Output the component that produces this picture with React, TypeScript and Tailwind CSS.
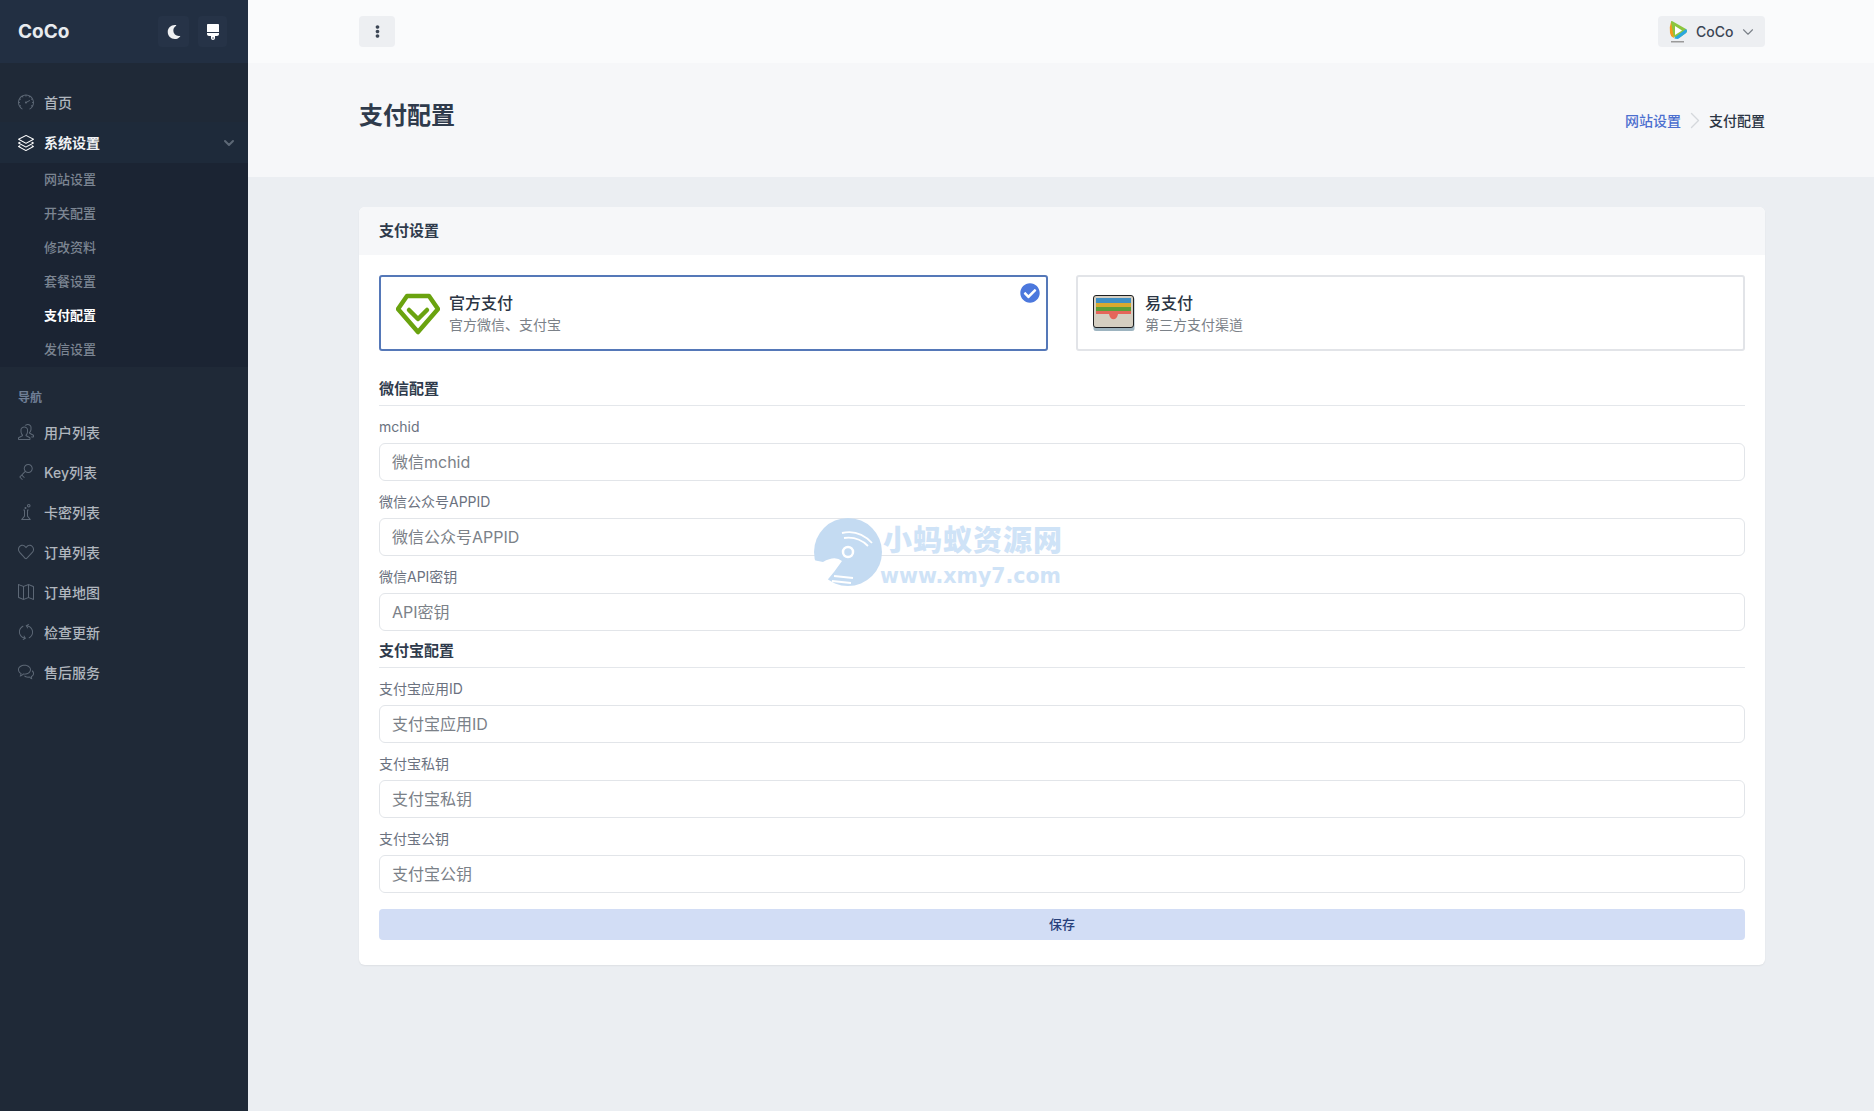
import { SlSpeedometer, SlLayers, SlPeople, SlKey, SlChemistry, SlHeart, SlMap, SlRefresh, SlBubbles } from "react-icons/sl";
import { FaMoon, FaBrush, FaEllipsisV, FaCheckCircle } from "react-icons/fa";
import { ChevronDown, ChevronRight } from "lucide-react";

const FONT = "font-['Inter','Noto_Sans_CJK_SC',sans-serif]";

const subMenu = ["网站设置", "开关配置", "修改资料", "套餐设置", "支付配置", "发信设置"];

const navItems = [
  { label: "用户列表", icon: SlPeople },
  { label: "Key列表", icon: SlKey },
  { label: "卡密列表", icon: SlChemistry },
  { label: "订单列表", icon: SlHeart },
  { label: "订单地图", icon: SlMap },
  { label: "检查更新", icon: SlRefresh },
  { label: "售后服务", icon: SlBubbles },
];

function Sidebar() {
  return (
    <aside className="w-[248px] shrink-0 bg-[#1f2937]">
      <div className="h-[63px] px-[18px] flex items-center justify-between bg-[#222f42]">
        <span className="mt-[1px] text-[19px] font-bold text-[#e8ebef]">CoCo</span>
        <div className="flex items-center gap-[9px] mr-[3px]">
          <button className="w-[31px] h-[31px] rounded-[4px] bg-[#263347] flex items-center justify-center text-[#eef0f2]">
            <FaMoon className="w-[14px] h-[14px]" />
          </button>
          <button className="w-[29px] h-[31px] rounded-[4px] bg-[#263347] flex items-center justify-center text-white">
            <FaBrush className="w-[16px] h-[16px]" />
          </button>
        </div>
      </div>

      <nav className="pt-[19px]">
        <a className="h-[40px] pl-[18px] flex items-center gap-[10px] text-[14px] font-medium text-[#b0b6be]">
          <SlSpeedometer className="w-[16px] h-[16px] text-[#5d6876]" />
          首页
        </a>
        <a className="h-[41px] pl-[18px] pr-[11px] flex items-center gap-[10px] text-[14px] font-semibold text-[#f1f3f5] bg-[#1e2a3a]">
          <SlLayers className="w-[16px] h-[16px] text-white" />
          系统设置
          <ChevronDown className="ml-auto w-[16px] h-[16px] text-[#5d6876]" strokeWidth={3} />
        </a>
        <div className="bg-[#1b2433]">
          {subMenu.map((name) => (
            <a
              key={name}
              className={`h-[34px] pl-[44px] flex items-center text-[13px] font-medium ${name === "支付配置" ? "text-white font-semibold" : "text-[#7c8592]"}`}
            >
              {name}
            </a>
          ))}
        </div>

        <div className="pt-[22px] pb-[5px] pl-[18px] text-[12px] font-semibold leading-[18px] text-[#6f7f96]">导航</div>
        {navItems.map(({ label, icon: Icon }) => (
          <a key={label} className="h-[40px] pl-[18px] flex items-center gap-[10px] text-[14px] font-medium text-[#b0b6be]">
            <Icon className="w-[16px] h-[16px] text-[#5d6876]" />
            {label}
          </a>
        ))}
      </nav>
    </aside>
  );
}

function Field({ label, placeholder }: { label: string; placeholder: string }) {
  return (
    <div className="mb-[10px]">
      <label className="block h-[21px] mb-[6px] text-[14px] leading-[21px] text-[#6b7280]">{label}</label>
      <input
        readOnly
        placeholder={placeholder}
        className="block w-full h-[38px] px-[12px] rounded-[6px] border border-[#e2e5e9] bg-white text-[16px] placeholder:text-[#7b8188] outline-none"
      />
    </div>
  );
}

function SectionTitle({ children }: { children: string }) {
  return (
    <div className="h-[27px] mb-[10px] border-b border-[#e4e7eb] text-[15px] leading-[20px] font-semibold text-[#2f3b4c]">
      {children}
    </div>
  );
}

function PayOption({ title, desc, active, icon }: { title: string; desc: string; active?: boolean; icon: React.ReactNode }) {
  return (
    <div className={`relative flex-1 h-[76px] px-[15px] flex items-center gap-[9px] rounded-[3px] border-2 ${active ? "border-[#5578b8]" : "border-[#e2e4e8]"}`}>
      {icon}
      <div>
        <div className="text-[16px] leading-[24px] font-medium text-[#2b3544]">{title}</div>
        <div className="text-[14px] leading-[20px] text-[#7b8188]">{desc}</div>
      </div>
      {active && (
        <FaCheckCircle className="absolute right-[6px] top-[6px] w-[20px] h-[20px] text-[#4c78dd]" />
      )}
    </div>
  );
}

function DiamondIcon() {
  return (
    <svg viewBox="0 0 44 44" className="w-[44px] h-[44px] shrink-0" fill="none" stroke="#6aa30f" strokeLinejoin="round">
      <path d="M11 5 H33 L42 18 L22 41 L2 18 Z" strokeWidth="4.5" />
      <path d="M13 19 L22 28 L31 19" strokeWidth="4.5" strokeLinecap="round" />
    </svg>
  );
}

function WalletIcon() {
  return (
    <svg viewBox="0 0 42 36" className="w-[42px] h-[36px] mr-[1px] shrink-0">
      <rect x="0.5" y="2" width="41" height="34" rx="2.5" fill="#9db4c0" />
      <rect x="0.5" y="0.5" width="40" height="32" rx="2.5" fill="#d5cfc2" stroke="#1f2022" />
      <rect x="3" y="3" width="35" height="5" fill="#3f8fc4" />
      <rect x="3" y="8" width="35" height="4" fill="#d9a92e" />
      <rect x="3" y="12" width="35" height="4" fill="#5a9e38" />
      <path d="M3 16 H38 V19 H25 C24 26 17 26 16 19 H3 Z" fill="#e5665a" />
    </svg>
  );
}

function Watermark() {
  return (
    <div className="absolute left-[813px] top-[518px] w-[252px] h-[74px] pointer-events-none">
      <svg viewBox="0 0 70 72" className="absolute left-0 top-0 w-[70px] h-[72px]">
        <circle cx="35" cy="34" r="34" fill="#c4dbf2" />
        <path d="M0 42 L10 44 Q22 37 29 43 L21 54 L11 66 L0 60 Z" fill="#fff" />
        <circle cx="35" cy="34" r="5" fill="none" stroke="#fff" strokeWidth="2.5" />
        <path d="M29 15 Q46 11 59 25 M31 20 Q45 18 55 28" fill="none" stroke="#fff" strokeWidth="1.8" />
        <path d="M21 58 L40 60 M19 63 L38 65" stroke="#fff" strokeWidth="1.8" />
      </svg>
      <div className="absolute left-[70px] top-[6px] text-[29px] leading-[34px] font-black tracking-[1px] whitespace-nowrap text-[#cfe3f7]">小蚂蚁资源网</div>
      <div className="absolute left-[67px] top-[44px] font-['DejaVu_Sans',sans-serif] text-[20.5px] leading-[28px] font-bold whitespace-nowrap text-[#cfe3f7]">www.xmy7.com</div>
    </div>
  );
}

export default function App() {
  return (
    <div className={`${FONT} relative min-h-[1111px] flex bg-[#ebeef2]`}>
      <Sidebar />
      <main className="flex-1 min-w-0">
        <header className="h-[63px] pl-[111px] pr-[109px] flex items-center justify-between bg-[#fafbfc]">
          <button className="w-[36px] h-[31px] rounded-[4px] bg-[#edeff2] flex items-center justify-center text-[#3b4554]">
            <FaEllipsisV className="w-[13px] h-[13px]" />
          </button>
          <button className="w-[107px] h-[31px] pl-[10px] pr-[8px] rounded-[4px] bg-[#edeff2] flex items-center text-[#3b4554] text-[14px] font-medium">
            <svg viewBox="0 0 20 24" className="w-[20px] h-[24px] mr-[8px]">
              <path d="M4 1 Q3 0.5 3 2 V16 L11 18 L18 13 Q20 11 18 9 Z" fill="#8cc63f" />
              <path d="M3 2 Q1 7 2 13 Q3 17 6 18 Z" fill="#f39a1e" />
              <path d="M18 9 Q20 11 18 13 L10 19 Q7 19 6 18 Z" fill="#2aa6e0" />
              <path d="M7 6 L14 10.5 L7 15 Z" fill="#fff" />
              <rect x="3" y="21" width="13" height="1.5" fill="#9a9a9a" />
            </svg>
            CoCo
            <ChevronDown className="ml-auto w-[18px] h-[18px] text-[#7b8188]" strokeWidth={1.5} />
          </button>
        </header>

        <div className="h-[114px] pl-[111px] pr-[109px] flex items-center justify-between bg-[#f6f7f9]">
          <h1 className="text-[24px] font-bold text-[#2f3b4c] -mt-[8px]">支付配置</h1>
          <div className="flex items-center text-[14px] font-medium">
            <a className="text-[#4c6fcf]">网站设置</a>
            <ChevronRight className="w-[28px] h-[29px] text-[#d5d8dc]" strokeWidth={1.2} />
            <span className="text-[#2b3544]">支付配置</span>
          </div>
        </div>

        <div className="pl-[111px] pr-[109px] pt-[30px]">
          <section className="rounded-[6px] bg-white shadow-[0_1px_2px_rgba(0,0,0,0.06)] overflow-hidden">
            <div className="h-[48px] px-[20px] flex items-center bg-[#f6f7f9] text-[15px] font-semibold text-[#2f3b4c]">支付设置</div>
            <div className="px-[20px] pt-[20px] pb-[25px]">
              <div className="flex gap-[28px] mb-[28px]">
                <PayOption active title="官方支付" desc="官方微信、支付宝" icon={<DiamondIcon />} />
                <PayOption title="易支付" desc="第三方支付渠道" icon={<WalletIcon />} />
              </div>

              <SectionTitle>微信配置</SectionTitle>
              <Field label="mchid" placeholder="微信mchid" />
              <Field label="微信公众号APPID" placeholder="微信公众号APPID" />
              <Field label="微信API密钥" placeholder="API密钥" />

              <SectionTitle>支付宝配置</SectionTitle>
              <Field label="支付宝应用ID" placeholder="支付宝应用ID" />
              <Field label="支付宝私钥" placeholder="支付宝私钥" />
              <Field label="支付宝公钥" placeholder="支付宝公钥" />

              <button className="w-full h-[31px] mt-[6px] rounded-[4px] bg-[#d2ddf5] text-[13px] font-medium text-[#27407a]">保存</button>
            </div>
          </section>
        </div>
      </main>
      <Watermark />
    </div>
  );
}
